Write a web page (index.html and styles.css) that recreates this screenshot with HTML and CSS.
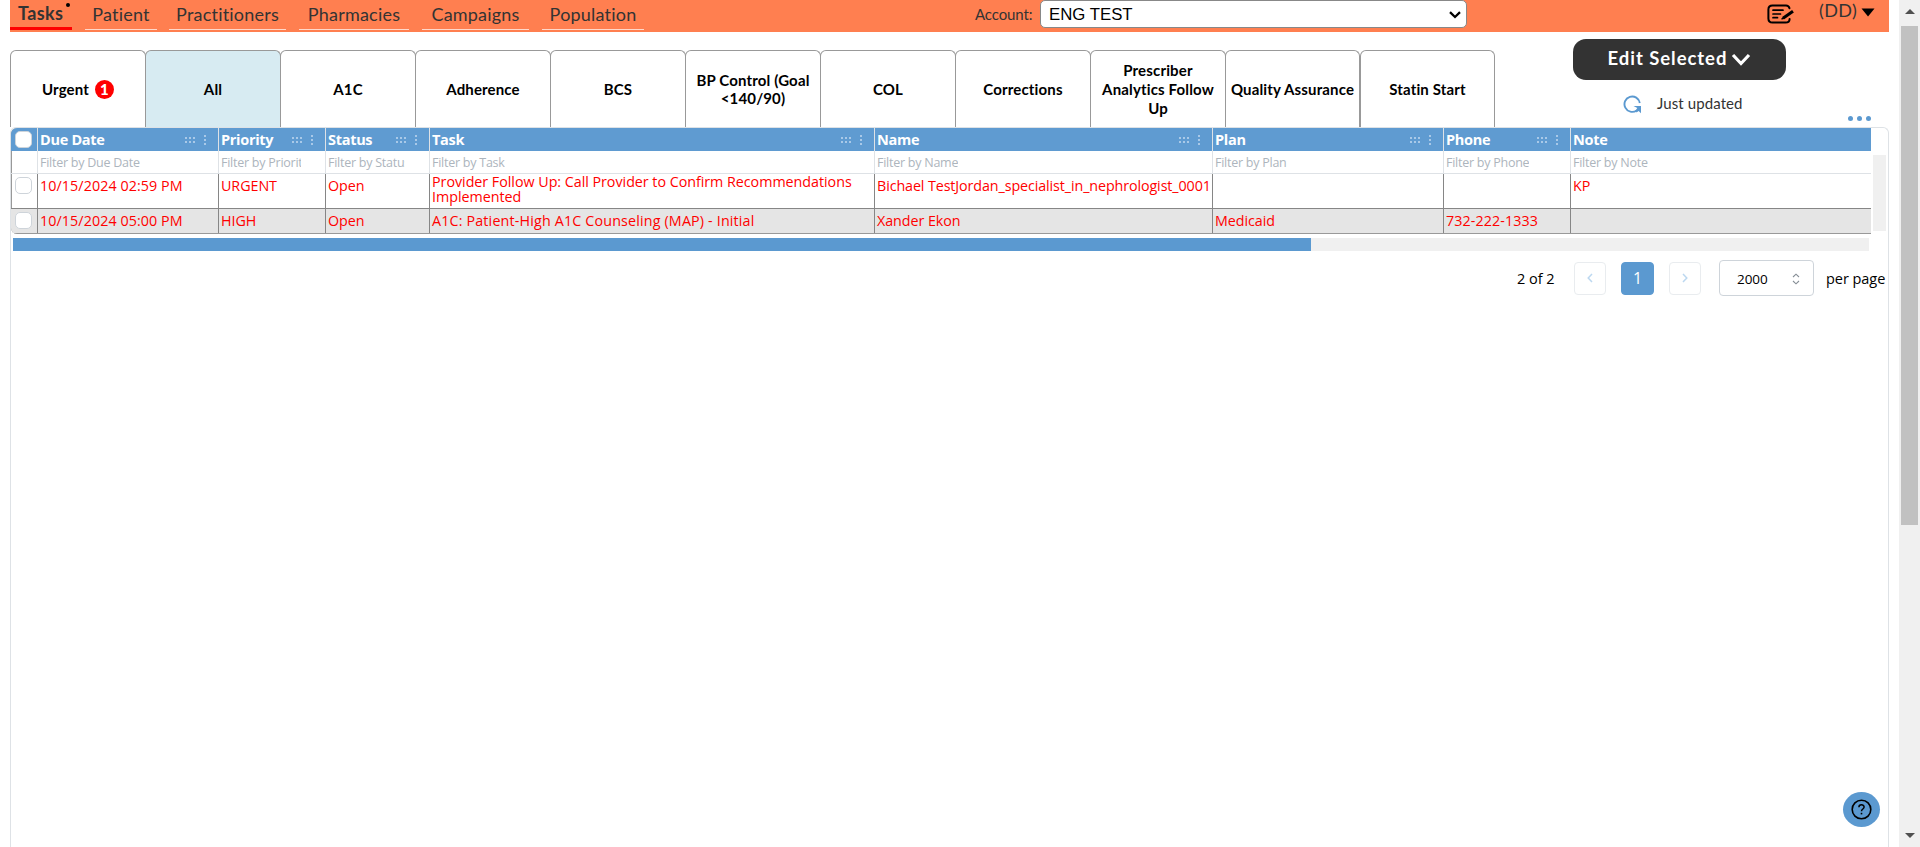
FILE: index.html
```html
<!DOCTYPE html>
<html lang="en">
<head>
<meta charset="utf-8">
<title>Tasks</title>
<link rel="stylesheet" href="styles.css">
</head>
<body>
<div class="page">
  <main class="content">
    <header class="topbar">
      <nav class="nav">
        <a class="nav-item active">Tasks<i class="nav-dot"></i></a>
        <a class="nav-item patient">Patient</a>
        <a class="nav-item practitioners">Practitioners</a>
        <a class="nav-item pharmacies">Pharmacies</a>
        <a class="nav-item campaigns">Campaigns</a>
        <a class="nav-item population">Population</a>
      </nav>
      <div class="account">
        <span class="account-label">Account:</span>
        <div class="account-select"><span>ENG TEST</span>
          <svg width="12" height="8" viewBox="0 0 12 8"><path d="M1 1.2 6 6l5-4.8" fill="none" stroke="#000" stroke-width="2.3"/></svg>
        </div>
      </div>
      <div class="user">
        <svg class="note-icon" width="28" height="20" viewBox="0 0 28 20" fill="none" stroke="#000" stroke-linecap="round"><path d="M22.5 4.2C22 2.2 21 1.4 19 1.4H5.500Q1.400 1.400 1.400 5.500V14.500Q1.400 18.600 5.500 18.600H18.500Q22.600 18.600 22.600 15" stroke-width="2"/><path d="M6 6.200H16M6 10H13.500M6 13.700H10.500" stroke-width="1.700"/><path d="M16 14.300 26 7.300" stroke-width="3" stroke-linecap="butt"/><path d="M15 14.800 17.200 13.500" stroke-width="1.500"/></svg>
        <span class="user-name">(DD)</span>
        <svg width="14" height="9" viewBox="0 0 14 9"><path d="M.5.500H13.500L7 8.500Z"/></svg>
      </div>
    </header>

    <section class="toolbar">
      <div class="tabs">
        <div class="tab"><span>Urgent</span><b class="count">1</b></div>
        <div class="tab selected">All</div>
        <div class="tab">A1C</div>
        <div class="tab">Adherence</div>
        <div class="tab">BCS</div>
        <div class="tab">BP Control (Goal<br>&lt;140/90)</div>
        <div class="tab">COL</div>
        <div class="tab">Corrections</div>
        <div class="tab three">Prescriber<br>Analytics Follow<br>Up</div>
        <div class="tab apart">Quality Assurance</div>
        <div class="tab apart">Statin Start</div>
      </div>
      <div class="actions">
        <button class="edit"><span>Edit Selected</span>
          <svg width="20" height="13" viewBox="0 0 20 13"><path d="M2 2 10 10.500 18 2" fill="none" stroke="#fff" stroke-width="3.200"/></svg>
        </button>
        <div class="updated">
          <svg width="19" height="19" viewBox="0 0 19 19"><path d="M16.800 8A7.700 7.700 0 1 0 13.700 15.400" fill="none" stroke="#5b99d0" stroke-width="1.900"/><path d="M10.500 11H18V18.300L15.600 16 13.500 17.500 12.500 15.500 14.300 13Z" fill="#5b99d0"/></svg>
          <span>Just updated</span>
        </div>
      </div>
      <div class="more"><i></i><i></i><i></i></div>
    </section>

    <section class="panel">
      <div class="grid-wrap">
        <div class="grid">
          <div class="row head">
            <div class="cell check"><i class="box"></i></div>
            <div class="cell"><span>Due Date</span><svg class="grip"><use href="#grip"/></svg></div>
            <div class="cell"><span>Priority</span><svg class="grip"><use href="#grip"/></svg></div>
            <div class="cell"><span>Status</span><svg class="grip"><use href="#grip"/></svg></div>
            <div class="cell"><span>Task</span><svg class="grip"><use href="#grip"/></svg></div>
            <div class="cell"><span>Name</span><svg class="grip"><use href="#grip"/></svg></div>
            <div class="cell"><span>Plan</span><svg class="grip"><use href="#grip"/></svg></div>
            <div class="cell"><span>Phone</span><svg class="grip"><use href="#grip"/></svg></div>
            <div class="cell"><span>Note</span></div>
          </div>
          <div class="row filter">
            <div class="cell"></div>
            <div class="cell"><span>Filter by Due Date</span></div>
            <div class="cell"><span>Filter by Priority</span></div>
            <div class="cell"><span>Filter by Status</span></div>
            <div class="cell"><span>Filter by Task</span></div>
            <div class="cell"><span>Filter by Name</span></div>
            <div class="cell"><span>Filter by Plan</span></div>
            <div class="cell"><span>Filter by Phone</span></div>
            <div class="cell"><span>Filter by Note</span></div>
          </div>
          <div class="row data first">
            <div class="cell check"><i class="box"></i></div>
            <div class="cell date">10/15/2024 02:59 PM</div>
            <div class="cell">URGENT</div>
            <div class="cell">Open</div>
            <div class="cell wrap">Provider Follow Up: Call Provider to Confirm Recommendations<br>Implemented</div>
            <div class="cell person">Bichael TestJordan_specialist_in_nephrologist_0001</div>
            <div class="cell"></div>
            <div class="cell"></div>
            <div class="cell">KP</div>
          </div>
          <div class="row data second">
            <div class="cell check"><i class="box"></i></div>
            <div class="cell date">10/15/2024 05:00 PM</div>
            <div class="cell">HIGH</div>
            <div class="cell">Open</div>
            <div class="cell loose">A1C: Patient-High A1C Counseling (MAP) - Initial</div>
            <div class="cell">Xander Ekon</div>
            <div class="cell">Medicaid</div>
            <div class="cell date">732-222-1333</div>
            <div class="cell"></div>
          </div>
        </div>
        <div class="vtrack"></div>
      </div>
      <div class="htrack"><div class="hthumb"></div></div>
      <div class="pager">
        <span class="total">2 of 2</span>
        <div class="pbtn"><svg width="6" height="10" viewBox="0 0 6 10"><path d="M5 1 1.200 5 5 9" fill="none" stroke="#bcd8f0" stroke-width="1.500"/></svg></div>
        <div class="pbtn current">1</div>
        <div class="pbtn"><svg width="6" height="10" viewBox="0 0 6 10"><path d="M1 1 4.800 5 1 9" fill="none" stroke="#bcd8f0" stroke-width="1.500"/></svg></div>
        <div class="size"><span>2000</span><svg width="8" height="12" viewBox="0 0 8 12"><path d="M1 4 4 1.200 7 4M1 8 4 10.800 7 8" fill="none" stroke="#868e96" stroke-width="1.100"/></svg></div>
        <span class="per">per page</span>
      </div>
    </section>
  </main>
  <aside class="scrollbar">
    <svg width="10" height="5" viewBox="0 0 10 5"><path d="M0 5 5 0 10 5Z" fill="#505050"/></svg>
    <div class="thumb"></div>
    <svg class="down" width="10" height="5" viewBox="0 0 10 5"><path d="M0 0 5 5 10 0Z" fill="#505050"/></svg>
  </aside>
</div>
<div class="help">
  <svg width="21" height="21" viewBox="0 0 21 21" fill="none" stroke="#000"><circle cx="10.500" cy="10.500" r="9.300" stroke-width="1.600"/><path d="M7.900 8.200C7.900 4.900 13.100 4.900 13.100 8.100 13.100 10.100 10.500 10 10.500 12.300" stroke-width="1.500"/><path d="M10.500 13.800V15.400" stroke-width="1.600"/></svg>
</div>
<svg class="defs" width="0" height="0"><defs>
  <g id="grip" fill="#a9c9e8">
    <path d="M0 3h2v2H0zM4 3h2v2H4zM8 3h2v2H8zM0 7h2v2H0zM4 7h2v2H4zM8 7h2v2H8zM19 1h2v2h-2zM19 5h2v2h-2zM19 9h2v2h-2z"/>
  </g>
</defs></svg>
</body>
</html>
```
FILE: styles.css
```css
* { box-sizing: border-box; }
body { margin: 0; height: 847px; overflow: hidden; background: #fff; font-family: "Open Sans", "Noto Sans", sans-serif; color: #000; }
svg { display: block; flex: none; }
.page { display: flex; height: 847px; }
.content { width: 1879px; margin-left: 10px; display: flex; flex-direction: column; }

.topbar { height: 32px; flex: none; background: #ff7f50; display: flex; color: #333; font-family: Lato, sans-serif; }
.nav { display: flex; align-items: flex-start; gap: 13px; width: 965px; }
.nav-item { height: 30px; line-height: 29px; font-size: 18px; white-space: nowrap; text-align: center; border-bottom: 1px solid #ffd8ca; letter-spacing: .2px; }
.nav-item.active { position: relative; width: 62px; border-bottom: 3px solid #f00; font-weight: 700; line-height: 27px; padding-left: 8px; text-align: left; letter-spacing: .4px; }
.nav-dot { position: absolute; left: 56px; top: 3px; width: 4px; height: 4px; border-radius: 50%; background: #000; }
.patient { width: 72px; }
.practitioners { width: 117px; margin-left: -1px; }
.pharmacies { width: 110px; }
.campaigns { width: 107px; }
.population { width: 102px; }
.account { display: flex; width: 792px; }
.account-label { width: 65px; line-height: 29px; font-size: 15px; white-space: nowrap; letter-spacing: -.1px; }
.account-select { width: 427px; height: 28px; border: 1px solid #888; border-radius: 5px; background: #fff; display: flex; align-items: center; justify-content: space-between; padding: 1px 5px 0 8px; font: 16.800px "Liberation Sans", Arial, sans-serif; color: #000; }
.account-select svg { margin-top: 1px; }
.user { display: flex; align-items: flex-start; font-size: 18px; line-height: 21px; }
.user .note-icon { margin-top: 4px; }
.user-name { width: 41px; margin-left: 24px; letter-spacing: .4px; }
.user svg:last-child { margin: 8px 0 0 1px; }

.toolbar { height: 95px; flex: none; display: flex; align-items: flex-start; }
.tabs { display: flex; width: 1563px; padding-top: 18px; font: 700 15px/18px Lato, sans-serif; letter-spacing: .15px; }
.tab { width: 136px; margin-right: -1px; height: 77px; border: 1px solid #999; border-bottom: 0; border-radius: 6px 6px 0 0; display: flex; align-items: center; justify-content: center; text-align: center; white-space: nowrap; }
.tab.apart { width: 135px; margin-right: 0; }
.tab.three { line-height: 19px; }
.tab.selected { background: #d7ebf2; }
.count { width: 19px; height: 19px; margin-left: 6px; border-radius: 50%; background: #f00; color: #fff; line-height: 19px; }
.actions { width: 213px; padding-top: 7px; font-family: Lato, sans-serif; }
.edit { width: 213px; height: 41px; border: 0; border-radius: 13px; background: #333; color: #fff; padding: 0 0 4px; font: 700 18.500px Lato, sans-serif; letter-spacing: .95px; display: flex; align-items: center; justify-content: center; gap: 4px; }
.edit svg { margin-top: 3px; }
.updated { display: flex; align-items: center; gap: 15px; height: 20px; margin: 14px 0 0 50px; font-size: 15px; color: #333; white-space: nowrap; letter-spacing: .1px; }
.updated span { margin-top: -2px; }
.more { display: flex; gap: 4px; margin: 84px 0 0 62px; }
.more i { width: 5px; height: 5px; border-radius: 50%; background: #5b99d0; }

.panel { flex: 1; border: 1px solid #dee2e6; border-bottom: 0; border-radius: 6px 6px 0 0; }
.grid-wrap { display: flex; gap: 2px; }
.grid { width: 1860px; height: 106px; border-radius: 6px 0 0 6px; overflow: hidden; box-shadow: inset 1px 0 #999; }
.row { display: grid; grid-template-columns: 26px 181px 107px 104px 445px 338px 231px 127px 301px; }
.cell { border-left: 1px solid #868686; padding-left: 2px; display: flex; align-items: center; white-space: nowrap; overflow: hidden; }
.cell:first-child { border-left: 0; padding: 0; }
.head { height: 23px; background: #5f9bd1; color: #fff; font-weight: 700; font-size: 14.500px; letter-spacing: -.3px; }
.head .cell { border-left-color: #dee2e6; justify-content: space-between; padding-right: 12px; }
.grip { width: 21px; height: 12px; }
.head .check, .data .check { justify-content: center; padding: 0 2px 0 0; }
.box { width: 17px; height: 17px; border: 1px solid #ced4da; border-radius: 5px; background: #fff; }
.filter { height: 23px; border-bottom: 1px solid #dee2e6; font-size: 12.500px; letter-spacing: -.25px; color: #adb5bd; }
.filter .cell { border-left-color: #dee2e6; padding-right: 24px; }
.filter span { overflow: hidden; }
.data { color: #f00; font-size: 14.300px; letter-spacing: -.05px; }
.data .cell { align-items: flex-start; line-height: 24px; }
.data .date { letter-spacing: .08px; }
.data .loose { letter-spacing: .16px; }
.data .person { letter-spacing: -.1px; }
.first { height: 35px; border-bottom: 1px solid #868686; }
.first .wrap { line-height: 15px; letter-spacing: -.03px; }
.second { height: 25px; background: #e5e5e5; border-bottom: 1px solid #999; }
.data .box { margin-top: 3px; }
.vtrack { width: 13px; height: 76px; margin-top: 27px; background: #f0f0f0; }
.htrack { width: 1856px; height: 13px; margin: 4px 0 0 2px; background: #f0f0f0; }
.hthumb { width: 1298px; height: 13px; background: #5b99d0; }
.pager { display: flex; align-items: center; justify-content: flex-end; height: 38px; margin: 8px 2px 0 0; font-size: 14.500px; white-space: nowrap; letter-spacing: -.05px; }
.total { width: 57px; }
.pbtn { width: 32px; height: 33px; border: 1px solid #e9ecef; border-radius: 4px; display: flex; align-items: center; justify-content: center; margin-right: 15px; }
.pbtn.current { width: 33px; border-color: #5b99d0; background: #5b99d0; color: #fff; font-size: 16px; }
.size { width: 95px; height: 36px; margin: 0 12px 0 3px; border: 1px solid #ced4da; border-radius: 4px; display: flex; align-items: center; justify-content: space-between; padding: 1px 13px 0 17px; font-size: 13.500px; }
.per { width: 60px; }

.scrollbar { width: 21px; margin-left: 10px; background: #f0f0f0; display: flex; flex-direction: column; align-items: center; padding: 9px 0; }
.thumb { width: 17px; height: 499px; margin-top: 12px; background: #c1c1c1; }
.down { margin-top: auto; }
.help { position: absolute; left: 1843px; top: 792px; width: 37px; height: 35px; border-radius: 50%; background: #5b99d0; display: flex; align-items: center; justify-content: center; padding-right: 1px; }
.defs { position: absolute; }
```
